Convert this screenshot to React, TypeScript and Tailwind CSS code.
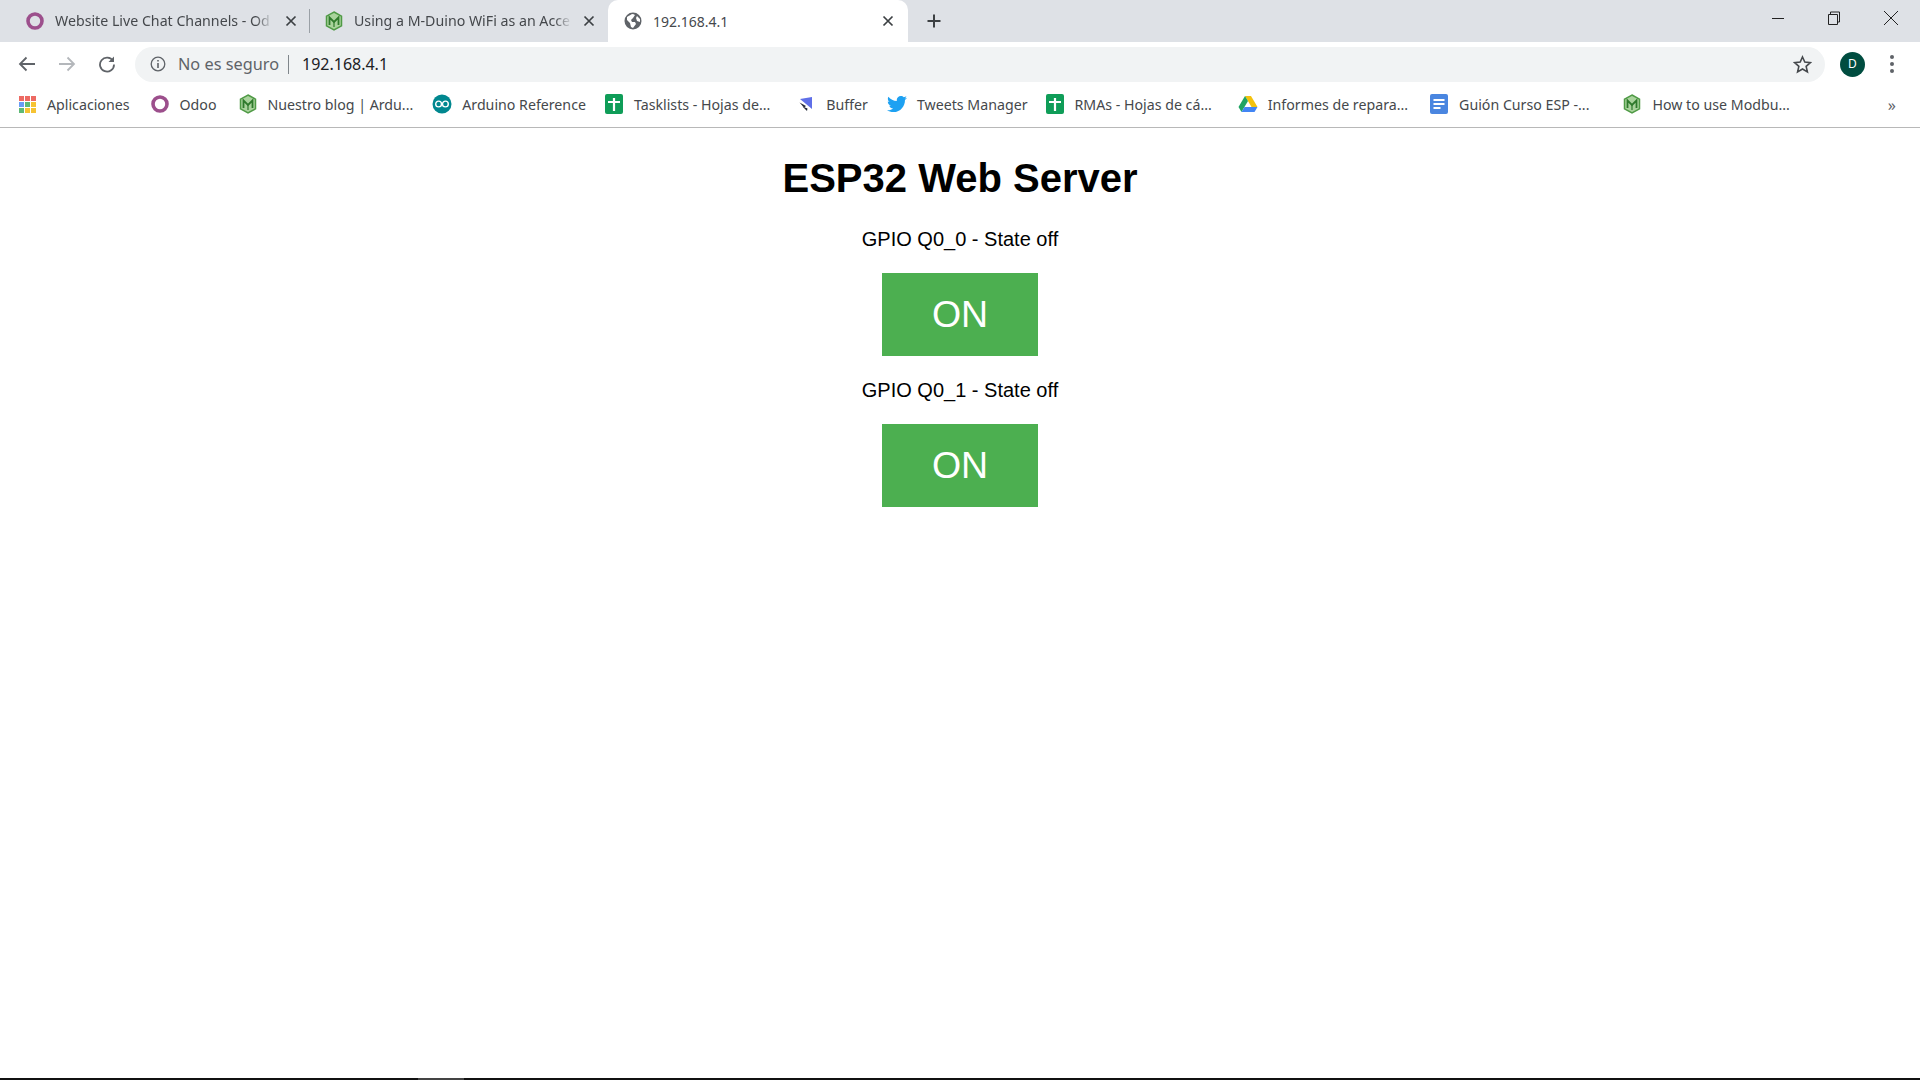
import React from 'react';
import { FaTwitter } from 'react-icons/fa';

const uiFont = "font-['Noto_Sans',sans-serif]";

const OdooIcon = () => (
  <svg width="18" height="18" viewBox="0 0 18 18">
    <circle cx="9" cy="9" r="7" fill="none" stroke="#9c4f8c" strokeWidth="3.6" />
  </svg>
);

const HexIcon = () => (
  <svg width="18" height="20" viewBox="0 0 18 20">
    <path d="M9 1 L16.5 5.2 V14.8 L9 19 L1.5 14.8 V5.2 Z" fill="#a9d39c" stroke="#4f9a45" strokeWidth="1.5" />
    <path d="M4.5 14 V6.5 L9 11 L13.5 6.5 V14" fill="none" stroke="#2f7a2c" strokeWidth="1.8" />
    <path d="M9 11 V16" fill="none" stroke="#2f7a2c" strokeWidth="1.2" />
  </svg>
);

const AppsIcon = () => (
  <div className="grid h-[17px] w-[17px] grid-cols-3 gap-[1px]">
    {['#e8453c', '#e8453c', '#e8453c', '#4285f4', '#34a853', '#f4b400', '#34a853', '#f4b400', '#f4b400'].map((c, i) => (
      <span key={i} className="h-[5px] w-[5px] opacity-80" style={{ backgroundColor: c }} />
    ))}
  </div>
);

const ArduinoIcon = () => (
  <svg width="20" height="20" viewBox="0 0 20 20">
    <circle cx="10" cy="10" r="9.5" fill="#00878f" />
    <circle cx="6.6" cy="10" r="2.9" fill="none" stroke="#fff" strokeWidth="1.4" />
    <circle cx="13.4" cy="10" r="2.9" fill="none" stroke="#fff" strokeWidth="1.4" />
  </svg>
);

const SheetIcon = () => (
  <svg width="20" height="20" viewBox="0 0 20 20">
    <rect x="1" y="0" width="18" height="20" rx="2" fill="#0f9d58" />
    <path d="M4 8 H16 M10 4 V17" stroke="#fff" strokeWidth="2.2" fill="none" />
  </svg>
);

const BufferIcon = () => (
  <svg width="16" height="16" viewBox="0 0 16 16">
    <path d="M2 3 L14 1 V13 Z" fill="#5f6fe8" />
    <path d="M1.5 6.5 L8 10 L6 11.5 Z" fill="#1d2230" />
    <path d="M4.5 10.5 L9 15 L9.5 12.5 Z" fill="#1d2230" />
  </svg>
);

const DriveIcon = () => (
  <svg width="20" height="18" viewBox="0 0 20 18">
    <path d="M7 1 H13 L19.5 12 H13.5 Z" fill="#f4c20d" />
    <path d="M7 1 L0.5 12 L3.5 17 L10 6 Z" fill="#1fa463" />
    <path d="M3.5 17 H16.5 L19.5 12 H6.5 Z" fill="#4285f4" />
  </svg>
);

const DocIcon = () => (
  <svg width="20" height="20" viewBox="0 0 20 20">
    <rect x="1" y="0" width="18" height="20" rx="2" fill="#4a86e0" />
    <path d="M4.5 6 H15.5 M4.5 10 H15.5 M4.5 14 H11.5" stroke="#fff" strokeWidth="2" fill="none" />
  </svg>
);

const GlobeIcon = () => (
  <svg width="18" height="18" viewBox="0 0 18 18">
    <circle cx="9" cy="9" r="8.5" fill="#5f6368" />
    <path d="M3 5 C5 4 7 2 9 2 L11 3 L9 6 L7 8 L8 10 L11 10 L12 12 L9 16 L7 15 L6 11 L3 8 Z M13 4 L16 7 L16 10 L13 9 L12 6 Z" fill="#fff" />
  </svg>
);

const Close = () => (
  <svg width="12" height="12" viewBox="0 0 12 12">
    <path d="M1.5 1.5 L10.5 10.5 M10.5 1.5 L1.5 10.5" stroke="#3c4043" strokeWidth="1.7" />
  </svg>
);

const Tab = ({ icon, title, className, closeGap }: { icon: React.ReactNode; title: string; className: string; closeGap: string }) => (
  <div className={`flex h-[42px] items-center ${className}`}>
    <div className="flex w-[18px] shrink-0 justify-center">{icon}</div>
    <div className="ml-[11px] w-[218px] whitespace-nowrap text-[14.2px] text-[#45484c] [mask-image:linear-gradient(to_right,black_92%,transparent)]">{title}</div>
    <div className={`shrink-0 ${closeGap}`}><Close /></div>
  </div>
);

const bookmarks: { icon: React.ReactNode; label: string; gap: string }[] = [
  { icon: <AppsIcon />, label: 'Aplicaciones', gap: 'ml-0' },
  { icon: <OdooIcon />, label: 'Odoo', gap: 'ml-[20px]' },
  { icon: <HexIcon />, label: 'Nuestro blog | Ardu...', gap: 'ml-[21px]' },
  { icon: <ArduinoIcon />, label: 'Arduino Reference', gap: 'ml-[19px]' },
  { icon: <SheetIcon />, label: 'Tasklists - Hojas de...', gap: 'ml-[18px]' },
  { icon: <BufferIcon />, label: 'Buffer', gap: 'ml-[26px]' },
  { icon: <FaTwitter className="text-[20px] text-[#1da1f2]" />, label: 'Tweets Manager', gap: 'ml-[19px]' },
  { icon: <SheetIcon />, label: 'RMAs - Hojas de cá...', gap: 'ml-[17px]' },
  { icon: <DriveIcon />, label: 'Informes de repara...', gap: 'ml-[26px]' },
  { icon: <DocIcon />, label: 'Guión Curso ESP -...', gap: 'ml-[21px]' },
  { icon: <HexIcon />, label: 'How to use Modbu...', gap: 'ml-[33px]' },
];

const GpioRow = ({ label }: { label: string }) => (
  <>
    <p className="mb-[21px] mt-[22px] text-[20px] leading-[25px] text-black">{label}</p>
    <button className="flex h-[83px] w-[156px] items-center justify-center bg-[#4caf50] text-[37.5px] text-white">ON</button>
  </>
);

export default function App() {
  return (
    <div className="flex h-[1080px] w-[1920px] flex-col overflow-hidden bg-white font-['Liberation_Sans',sans-serif]">
      {/* tab strip */}
      <div className={`flex h-[42px] shrink-0 items-center bg-[#dee1e6] ${uiFont}`}>
        <Tab icon={<OdooIcon />} title="Website Live Chat Channels - Od" className="w-[309px] pl-[26px]" closeGap="ml-[12px]" />
        <span className="h-[24px] w-px bg-[#9aa0a6]" />
        <Tab icon={<HexIcon />} title="Using a M-Duino WiFi as an Acce" className="w-[298px] pl-[15px]" closeGap="ml-[11px]" />
        <div className="flex h-[42px] w-[300px] items-center rounded-t-[10px] bg-white pl-[16px]">
          <GlobeIcon />
          <div className="ml-[11px] w-[215px] whitespace-nowrap text-[14px] text-[#45484c]">192.168.4.1</div>
          <div className="ml-[14px]"><Close /></div>
        </div>
        <svg className="ml-[18px]" width="16" height="16" viewBox="0 0 16 16">
          <path d="M8 1.5 V14.5 M1.5 8 H14.5" stroke="#3c4043" strokeWidth="2" />
        </svg>
        <div className="ml-auto flex items-center pb-[6px]">
          <svg width="14" height="14" viewBox="0 0 14 14"><path d="M1 7.5 H13" stroke="#222" strokeWidth="1" /></svg>
          <svg className="ml-[42px]" width="14" height="14" viewBox="0 0 14 14">
            <path d="M1.5 3.5 H10.5 V13.5 H1.5 Z M3.5 3.5 V1 H12.5 V11 H10.5" fill="none" stroke="#222" strokeWidth="1" />
          </svg>
          <svg className="ml-[42px] mr-[21px]" width="16" height="16" viewBox="0 0 16 16">
            <path d="M1 1 L15 15 M15 1 L1 15" stroke="#222" strokeWidth="1" />
          </svg>
        </div>
      </div>

      {/* toolbar */}
      <div className={`flex h-[44px] shrink-0 items-center bg-white ${uiFont}`}>
        <svg className="ml-[18px]" width="18" height="18" viewBox="0 0 18 18">
          <path d="M17 9 H2 M8.5 2.5 L2 9 L8.5 15.5" fill="none" stroke="#5f6368" strokeWidth="1.8" />
        </svg>
        <svg className="ml-[22px]" width="18" height="18" viewBox="0 0 18 18">
          <path d="M1 9 H16 M9.5 2.5 L16 9 L9.5 15.5" fill="none" stroke="#b4b7bb" strokeWidth="1.8" />
        </svg>
        <svg className="ml-[22px]" width="18" height="18" viewBox="0 0 18 18">
          <path d="M15 6 A7 7 0 1 0 16 9.5" fill="none" stroke="#5f6368" strokeWidth="1.8" />
          <path d="M16 1.5 V7 H10.5 Z" fill="#5f6368" />
        </svg>
        <div className="ml-[19px] flex h-[35px] w-[1690px] items-center rounded-full bg-[#f1f3f4] pl-[15px] pr-[13px]">
          <svg width="16" height="16" viewBox="0 0 16 16">
            <circle cx="8" cy="8" r="6.8" fill="none" stroke="#5f6368" strokeWidth="1.3" />
            <path d="M8 7 V12 M8 4 V5.6" stroke="#5f6368" strokeWidth="1.6" />
          </svg>
          <span className="ml-[12px] text-[16.3px] text-[#5f6368]">No es seguro</span>
          <span className="ml-[9px] h-[19px] w-px bg-[#80868b]" />
          <span className="ml-[13px] text-[16px] text-[#202124]">192.168.4.1</span>
          <svg className="ml-auto" width="19" height="19" viewBox="0 0 24 24">
            <path d="M12 2.5 L14.9 9 L22 9.7 L16.6 14.4 L18.2 21.4 L12 17.7 L5.8 21.4 L7.4 14.4 L2 9.7 L9.1 9 Z" fill="none" stroke="#45484c" strokeWidth="2" />
          </svg>
        </div>
        <div className="ml-[15px] flex h-[25px] w-[25px] shrink-0 items-center justify-center rounded-full bg-[#004d40] text-[12px] text-white">D</div>
        <div className="ml-[25px] flex flex-col gap-[3px]">
          <span className="h-[4px] w-[4px] rounded-full bg-[#5f6368]" />
          <span className="h-[4px] w-[4px] rounded-full bg-[#5f6368]" />
          <span className="h-[4px] w-[4px] rounded-full bg-[#5f6368]" />
        </div>
      </div>

      {/* bookmarks bar */}
      <div className={`flex h-[42px] shrink-0 items-center border-b border-[#b8b8b8] bg-white pb-[4px] pl-[17px] ${uiFont}`}>
        {bookmarks.map((b) => (
          <div key={b.label} className={`flex items-center ${b.gap}`}>
            <div className="flex w-[20px] shrink-0 justify-center">{b.icon}</div>
            <span className="ml-[10px] whitespace-nowrap text-[14.2px] text-[#45484c]">{b.label}</span>
          </div>
        ))}
        <span className="ml-auto mr-[24px] text-[16px] text-[#5f6368]">»</span>
      </div>

      {/* page content */}
      <div className="flex flex-1 flex-col items-center">
        <h1 className="mb-[4px] mt-[27px] text-[40px] font-bold leading-[46px] text-black">ESP32 Web Server</h1>
        <GpioRow label="GPIO Q0_0 - State off" />
        <GpioRow label="GPIO Q0_1 - State off" />
      </div>

      {/* dark edge along the bottom */}
      <div className="flex h-[2px] shrink-0 bg-[#111]">
        <div className="ml-[418px] h-[2px] w-[46px] bg-[#444]" />
      </div>
    </div>
  );
}
